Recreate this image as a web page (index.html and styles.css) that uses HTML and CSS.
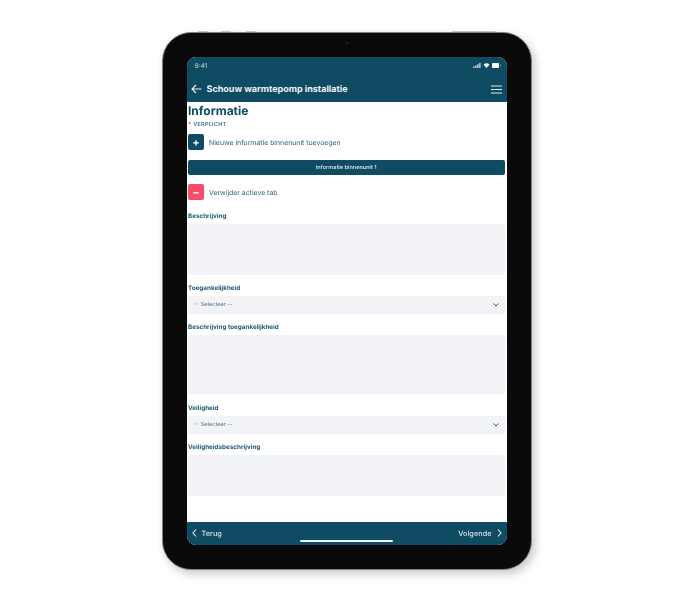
FILE: index.html
```html
<!DOCTYPE html>
<html lang="nl">
<head>
<meta charset="utf-8">
<title>Schouw warmtepomp installatie</title>
<link rel="stylesheet" href="styles.css">
</head>
<body>
<div class="device">
  <span class="hw hw-a"></span><span class="hw hw-b"></span><span class="hw hw-c"></span><span class="hw hw-d"></span>
  <span class="camera"></span>
  <div class="screen">
    <header class="appbar">
      <div class="status">
        <span>9:41</span>
        <div class="status-icons">
          <svg width="8" height="5" viewBox="0 0 9 6"><rect x="0" y="4" width="1.5" height="2" fill="#dfe8ec"/><rect x="2.4" y="3" width="1.5" height="3" fill="#dfe8ec"/><rect x="4.8" y="1.5" width="1.5" height="4.5" fill="#dfe8ec"/><rect x="7.2" y="0" width="1.5" height="6" fill="#dfe8ec"/></svg>
          <svg width="7" height="5" viewBox="0 0 7 6"><path d="M0 2a5 5 0 0 1 7 0L3.500 6z" fill="#fff"/></svg>
          <svg width="10" height="5" viewBox="0 0 10 5"><rect x="0" y="0" width="7" height="5" rx="1" fill="#fff"/><rect x="8" y="1.500" width="1" height="2" fill="#7fa3b2"/></svg>
        </div>
      </div>
      <div class="titlebar">
        <svg class="back" width="11" height="10" viewBox="0 0 11 10"><path d="M10.500 5H1M5 1 1 5l4 4" fill="none" stroke="#e8eff2" stroke-width="1.100"/></svg>
        <h1>Schouw warmtepomp installatie</h1>
        <svg class="menu" width="11" height="9" viewBox="0 0 11 9"><path d="M0 1h11M0 4.500h11M0 8h11" stroke="#dfe8ec" stroke-width="1.100"/></svg>
      </div>
    </header>
    <main class="content">
      <h2>Informatie</h2>
      <p class="required"><b>*</b> VERPLICHT</p>
      <div class="action action-add">
        <span class="square square-teal">+</span>
        <span>Nieuwe informatie binnenunit toevoegen</span>
      </div>
      <div class="tab">Informatie binnenunit 1</div>
      <div class="action action-remove">
        <span class="square square-red">−</span>
        <span>Verwijder actieve tab</span>
      </div>
      <label class="field-label label-1">Beschrijving</label>
      <div class="input area-1"></div>
      <label class="field-label label-2">Toegankelijkheid</label>
      <div class="input select"><span>-- Selecteer --</span><svg width="6" height="4" viewBox="0 0 6 4"><path d="M.5.500 3 3 5.500.500" fill="none" stroke="#38566a" stroke-width="1"/></svg></div>
      <label class="field-label label-3">Beschrijving toegankelijkheid</label>
      <div class="input area-2"></div>
      <label class="field-label label-4">Veiligheid</label>
      <div class="input select"><span>-- Selecteer --</span><svg width="6" height="4" viewBox="0 0 6 4"><path d="M.5.500 3 3 5.500.500" fill="none" stroke="#38566a" stroke-width="1"/></svg></div>
      <label class="field-label label-5">Veiligheidsbeschrijving</label>
      <div class="input area-3"></div>
    </main>
    <footer class="bottombar">
      <div class="nav"><svg width="5" height="8" viewBox="0 0 5 8"><path d="M4 .5 1 4l3 3.500" fill="none" stroke="#e8eff2" stroke-width="1.100"/></svg><span>Terug</span></div>
      <div class="nav"><span>Volgende</span><svg width="5" height="8" viewBox="0 0 5 8"><path d="M1 .5 4 4 1 7.500" fill="none" stroke="#e8eff2" stroke-width="1.100"/></svg></div>
      <span class="home"></span>
    </footer>
  </div>
</div>
</body>
</html>
```

FILE: styles.css
```css
* { box-sizing: border-box; }
html, body { margin: 0; height: 100%; }
body {
  background: #fff;
  font-family: Inter, "Liberation Sans", sans-serif;
  text-rendering: geometricPrecision;
  padding: 32px 0 0 162px;
  overflow: hidden;
}
.device {
  position: relative;
  width: 370px;
  height: 538px;
  padding: 25px;
  background: #0a0a0a;
  border: 1.5px solid #808284;
  border-radius: 29px;
  box-shadow: 3px 4px 10px rgba(0, 0, 0, .22);
  filter: blur(.6px);
}
.hw { position: absolute; top: -2.5px; height: 1.5px; background: #c4c5c6; border-radius: 1px; }
.hw-a { left: 35px; width: 10px; }
.hw-b { left: 58px; width: 10px; }
.hw-c { left: 83px; width: 10px; }
.hw-d { left: 289px; width: 44px; }
.camera { position: absolute; left: 183px; top: 9px; width: 2px; height: 2px; border-radius: 50%; background: #2a2a2e; }
.screen {
  margin: -1.5px;
  height: 488px;
  width: 320px;
  background: #fff;
  border-radius: 9px;
  overflow: hidden;
  display: flex;
  flex-direction: column;
}
.appbar { height: 45.5px; background: #0f4c64; color: #fff; flex: none; padding: 0 5px 0 8px; }
.status { height: 18px; display: flex; justify-content: space-between; align-items: center; font-size: 6.5px; color: #c9d7dd; }
.status-icons { display: flex; gap: 2px; align-items: center; }
.titlebar { height: 27px; display: flex; align-items: center; padding-top: 2px; }
.back { margin-left: -4px; margin-right: 5px; flex: none; }
.appbar h1 { margin: 0; font-size: 9px; font-weight: 700; color: #eef3f5; flex: 1; white-space: nowrap; }
.menu { flex: none; }
.content { flex: 1; padding: 1px 2px 0 1.5px; color: #0f4c64; overflow: hidden; }
.content h2 { margin: 0; font-size: 12px; line-height: 15px; font-weight: 700; }
.required { margin: 3px 0 0; font-size: 5.600px; line-height: 8px; font-weight: 600; letter-spacing: .2px; color: #3f7188; }
.required b { color: #f2496b; }
.action { display: flex; align-items: center; gap: 5px; font-size: 6.900px; color: #2d627a; height: 16px; }
.action-add { margin-top: 5px; }
.action-remove { margin-top: 9px; }
.square { width: 16px; height: 16px; border-radius: 2px; color: #fff; display: flex; align-items: center; justify-content: center; font-size: 11px; font-weight: 600; flex: none; }
.square-teal { background: #0f4c64; }
.square-red { background: #f64d6f; }
.tab { margin-top: 10px; height: 15px; background: #0f4c64; border-radius: 2px; color: #e4ecef; font-size: 5.600px; font-weight: 500; display: flex; align-items: center; justify-content: center; }
.field-label { display: block; font-size: 6.300px; line-height: 9px; font-weight: 700; color: #1d5a73; }
.label-1 { margin-top: 12px; }
.label-2, .label-3, .label-5 { margin-top: 9px; }
.label-4 { margin-top: 10px; }
.input { background: #f2f3f7; border-radius: 3px; margin-top: 3px; }
.area-1 { height: 51px; }
.area-2 { height: 59px; }
.area-3 { height: 41px; }
.select { height: 18px; display: flex; align-items: center; justify-content: space-between; padding: 0 6px; font-size: 5.600px; color: #55707f; }
.bottombar { position: relative; flex: none; height: 23px; background: #0f4c64; color: #d8e4e9; display: flex; justify-content: space-between; align-items: center; padding: 0 5px; font-size: 7.200px; font-weight: 500; }
.nav { display: flex; align-items: center; gap: 5px; letter-spacing: .1px; }
.home { position: absolute; left: 113px; bottom: 3px; width: 93px; height: 1.500px; background: #f4f7f8; border-radius: 1px; }
```
